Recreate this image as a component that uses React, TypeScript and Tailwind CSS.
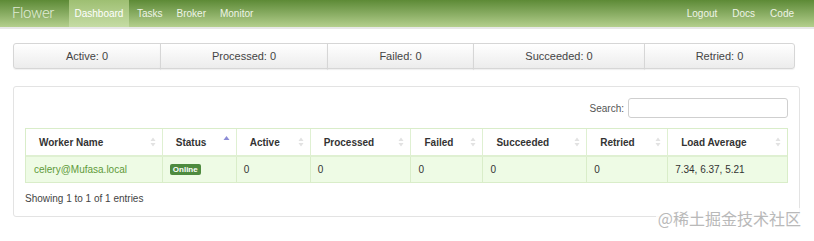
import React from "react";

const cols = [
  { name: "Worker Name", w: 136, sort: "both" },
  { name: "Status", w: 74, sort: "asc" },
  { name: "Active", w: 74, sort: "both" },
  { name: "Processed", w: 101, sort: "both" },
  { name: "Failed", w: 72, sort: "both" },
  { name: "Succeeded", w: 104, sort: "both" },
  { name: "Retried", w: 81, sort: "both" },
  { name: "Load Average", w: 120, sort: "both" },
];

function SortBoth() {
  return (
    <svg width="6" height="10" viewBox="0 0 6 10" className="shrink-0">
      <path d="M3 0.5 L5.5 4 L0.5 4 Z" fill="#e2e2e2" />
      <path d="M3 9.5 L5.5 6 L0.5 6 Z" fill="#e2e2e2" />
    </svg>
  );
}

function SortAsc() {
  return (
    <svg width="7" height="10" viewBox="0 0 7 10" className="shrink-0 -mt-[4px]">
      <path d="M3.5 1 L6.5 5 L0.5 5 Z" fill="#8c8cd6" />
    </svg>
  );
}

export default function App() {
  const stats = [
    { label: "Active: 0", w: 148 },
    { label: "Processed: 0", w: 168 },
    { label: "Failed: 0", w: 147 },
    { label: "Succeeded: 0", w: 172 },
    { label: "Retried: 0", w: 151 },
  ];
  const cells = ["celery@Mufasa.local", "badge", "0", "0", "0", "0", "0", "7.34, 6.37, 5.21"];
  return (
    <div
      className="relative w-[814px] h-[241px] overflow-hidden bg-white text-[#333]"
      style={{ fontFamily: '"Liberation Sans", Arial, sans-serif' }}
    >
      {/* navbar */}
      <div className="h-[27px] bg-gradient-to-b from-[#5d8a36] to-[#b4cf8d] flex items-stretch border-b-2 border-[#e8e8e8] box-content">
        <div
          className="pl-[12px] pr-[15px] flex items-center text-[15px] font-light text-[#dfe9d2] tracking-[-0.4px]"
          style={{ fontFamily: 'Roboto, "Open Sans", sans-serif', fontWeight: 300 }}
        >
          Flower
        </div>
        <div className="flex items-stretch text-[10px] text-[#eef4e7]">
          <div className="px-[7px] flex items-center bg-gradient-to-b from-[#9ebf72] to-[#c5dca4] text-white w-[60px] justify-center">
            Dashboard
          </div>
          <div className="pl-[8px] pr-[7px] flex items-center">Tasks</div>
          <div className="px-[7px] flex items-center">Broker</div>
          <div className="px-[7px] flex items-center">Monitor</div>
        </div>
        <div className="ml-auto flex items-center gap-[15px] pr-[20px] text-[10px] text-[#eef4e7]">
          <span>Logout</span>
          <span>Docs</span>
          <span>Code</span>
        </div>
      </div>

      {/* stats */}
      <div className="mt-[14px] ml-[13px] flex">
        {stats.map((s, i) => (
          <div
            key={s.label}
            style={{ width: s.w }}
            className={`h-[26px] flex items-center justify-center text-[11px] text-[#444] bg-gradient-to-b from-white to-[#ececec] border border-[#d6d6d6] ${
              i === 0 ? "rounded-l-[3px]" : "-ml-px"
            } ${i === stats.length - 1 ? "rounded-r-[3px]" : ""} shadow-[0_1px_1px_rgba(0,0,0,0.06)]`}
          >
            {s.label}
          </div>
        ))}
      </div>

      {/* panel */}
      <div className="mt-[17px] ml-[13px] w-[787px] h-[131px] border border-[#e3e3e3] rounded-[3px] px-[11px] pt-[11px]">
        <div className="flex justify-end items-center gap-[4px]">
          <span className="text-[10px] text-[#555]">Search:</span>
          <div className="w-[160px] h-[20px] border border-[#cfcfcf] rounded-[3px] bg-white" />
        </div>
        <div className="mt-[10px] w-[763px] border border-[#d9edc9]">
          <div className="flex h-[28px] bg-white border-b-2 border-[#dff0d2]">
            {cols.map((c, i) => (
              <div
                key={c.name}
                style={{ width: c.w }}
                className={`flex items-center justify-between pl-[13px] pr-[6px] text-[10px] font-bold text-[#333] ${
                  i > 0 ? "border-l border-[#dff0d2]" : ""
                }`}
              >
                <span>{c.name}</span>
                {c.sort === "asc" ? <SortAsc /> : <SortBoth />}
              </div>
            ))}
          </div>
          <div className="flex h-[25px] bg-[#eefbe5]">
            {cols.map((c, i) => (
              <div
                key={c.name}
                style={{ width: c.w }}
                className={`flex items-center ${i === 0 ? "pl-[8px]" : "pl-[7px]"} text-[10px] ${
                  i > 0 ? "border-l border-[#d9edc9]" : ""
                } ${i === 0 ? "text-[#5f9a3a]" : "text-[#333]"}`}
              >
                {cells[i] === "badge" ? (
                  <span className="px-[3px] h-[11px] leading-[11px] rounded-[2px] bg-[#4e8a3f] text-white text-[8px] font-bold">
                    Online
                  </span>
                ) : (
                  cells[i]
                )}
              </div>
            ))}
          </div>
        </div>
        <div className="mt-[8px] text-[10px] text-[#444]">Showing 1 to 1 of 1 entries</div>
      </div>

      {/* watermark */}
      <div
        className="absolute right-[11px] top-[208px] text-[16px] text-[#b9b9b9] bg-white/80 px-[2px] leading-[20px]"
        style={{ fontFamily: '"Noto Sans CJK SC", "Liberation Sans", sans-serif' }}
      >
        @稀土掘金技术社区
      </div>
    </div>
  );
}
